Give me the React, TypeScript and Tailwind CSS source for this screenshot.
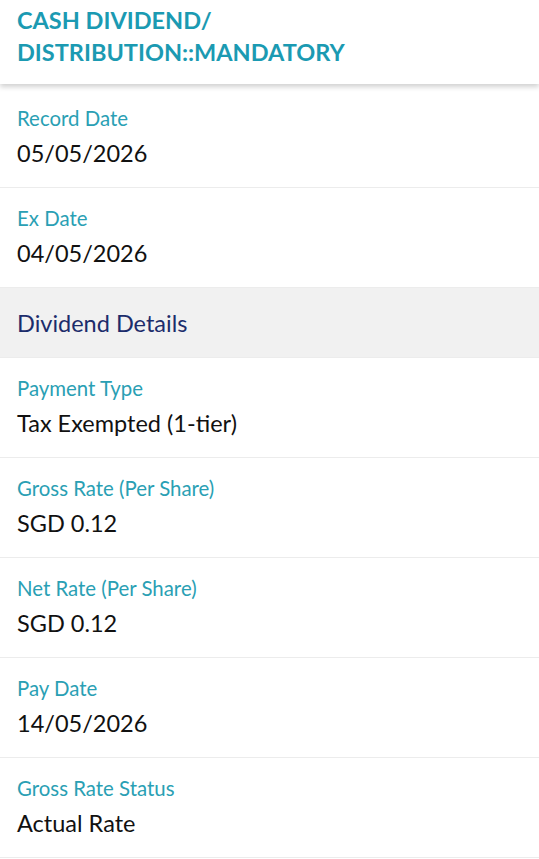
import React from 'react';

interface Field {
    label: string;
    value: string;
}

const topFields: Field[] = [
    { label: 'Record Date', value: '05/05/2026' },
    { label: 'Ex Date', value: '04/05/2026' },
];

const dividendFields: Field[] = [
    { label: 'Payment Type', value: 'Tax Exempted (1-tier)' },
    { label: 'Gross Rate (Per Share)', value: 'SGD 0.12' },
    { label: 'Net Rate (Per Share)', value: 'SGD 0.12' },
    { label: 'Pay Date', value: '14/05/2026' },
    { label: 'Gross Rate Status', value: 'Actual Rate' },
];

const FieldRow = ({ label, value }: Field) => (
    <div className="h-[100px] border-b border-[#ececec] px-[17px] pt-[17px]">
        <div className="text-[20.4px] leading-[26px] text-[#2a9fb4]">{label}</div>
        <div className="mt-[7px] text-[23.5px] leading-[30px] text-[#111111]">{value}</div>
    </div>
);

export default function App() {
    return (
        <div className="min-h-[859px] bg-white font-['Lato','Liberation_Sans',sans-serif]">
            <div className="relative z-10 h-[84px] bg-white px-[17px] pt-[4px] shadow-[0_3px_5px_rgba(0,0,0,0.18)]">
                <h1 className="text-[23.5px] font-bold leading-[32px] text-[#1b9ab2]">
                    CASH DIVIDEND/
                    <br />
                    DISTRIBUTION::MANDATORY
                </h1>
            </div>

            <div className="pt-[4px]">
                {topFields.map((f) => (
                    <FieldRow key={f.label} {...f} />
                ))}
            </div>

            <div className="flex h-[70px] items-center border-b border-[#ececec] bg-[#f1f1f1] px-[17px]">
                <h2 className="text-[23.5px] leading-[30px] text-[#1c2c6b]">Dividend Details</h2>
            </div>

            {dividendFields.map((f) => (
                <FieldRow key={f.label} {...f} />
            ))}
        </div>
    );
}
